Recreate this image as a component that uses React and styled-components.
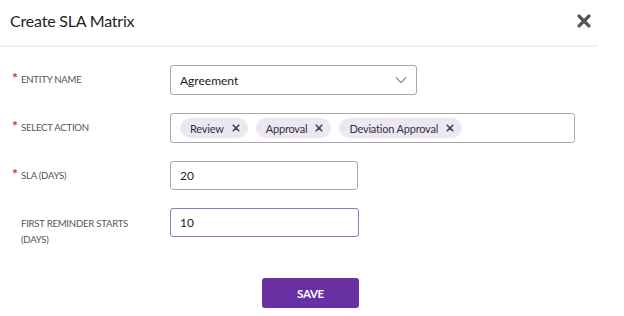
import React from "react";
import styled, { createGlobalStyle } from "styled-components";

const GlobalStyle = createGlobalStyle`
  html, body {
    margin: 0;
    padding: 0;
    background: #fff;
    font-family: "Lato", "Open Sans", sans-serif;
  }
  * { box-sizing: border-box; }
`;

const Modal = styled.div`
  width: 598px;
  height: 316px;
  background: #fff;
`;

const Header = styled.div`
  display: flex;
  align-items: center;
  justify-content: space-between;
  height: 47px;
  padding: 0 7px 4px 10px;
  border-bottom: 2px solid #f0f0f0;
`;

const Title = styled.h2`
  margin: 0;
  font-size: 16px;
  font-weight: 400;
  color: #222;
  letter-spacing: -0.2px;
`;

const CloseButton = styled.button`
  border: none;
  background: none;
  padding: 0;
  display: flex;
  cursor: pointer;
`;

const Form = styled.div`
  display: flex;
  flex-direction: column;
  gap: 18px;
  padding: 18px 0 0 12px;
`;

const Row = styled.div`
  display: grid;
  grid-template-columns: 158px auto;
  align-items: ${(p) => (p.$top ? "start" : "center")};
`;

const Label = styled.label`
  display: flex;
  gap: 3px;
  font-size: 9.6px;
  line-height: 16px;
  color: #555;
  letter-spacing: -0.25px;
  text-transform: uppercase;
  padding-top: ${(p) => (p.$top ? "8px" : "0")};
`;

const Star = styled.span`
  color: #e8261f;
  font-size: 14px;
  font-weight: 700;
  width: 6px;
  line-height: 12px;
`;

const Field = styled.div`
  display: flex;
  align-items: center;
  width: ${(p) => p.$w}px;
  height: ${(p) => p.$h || 30}px;
  padding: 0 9px;
  border: 1px solid ${(p) => (p.$focus ? "#9b72c9" : "#a9a9a9")};
  border-radius: 3px;
  font-size: 12px;
  color: #222;
  gap: 8px;
`;

const Value = styled.span`
  flex: 1;
`;

const Chip = styled.span`
  display: inline-flex;
  align-items: center;
  gap: 8px;
  height: 20px;
  padding: 0 8px 0 10px;
  border-radius: 10px;
  background: #ede7f4;
  font-size: 11px;
  letter-spacing: -0.2px;
  color: #333;
`;

const Footer = styled.div`
  display: flex;
  padding: 30px 0 0 262px;
`;

const SaveButton = styled.button`
  width: 97px;
  height: 30px;
  border: none;
  border-radius: 3px;
  background: #6930a3;
  color: #fff;
  font-family: inherit;
  font-size: 11.5px;
  font-weight: 700;
  letter-spacing: -0.3px;
`;

const Cross = ({ size = 8, color = "#444", stroke = 2 }) => (
  <svg width={size} height={size} viewBox="0 0 10 10">
    <path d="M1.5 1.5 L8.5 8.5 M8.5 1.5 L1.5 8.5" stroke={color} strokeWidth={stroke} strokeLinecap="round" />
  </svg>
);

const Chevron = () => (
  <svg width="12" height="8" viewBox="0 0 12 8">
    <path d="M1 1.5 L6 6.5 L11 1.5" fill="none" stroke="#999" strokeWidth="1.5" />
  </svg>
);

const actions = ["Review", "Approval", "Deviation Approval"];

export default function App() {
  return (
    <>
      <GlobalStyle />
      <Modal>
        <Header>
          <Title>Create SLA Matrix</Title>
          <CloseButton>
            <Cross size={14} color="#555" stroke={2.4} />
          </CloseButton>
        </Header>
        <Form>
          <Row>
            <Label><Star>*</Star>Entity Name</Label>
            <Field $w={247}>
              <Value>Agreement</Value>
              <Chevron />
            </Field>
          </Row>
          <Row>
            <Label><Star>*</Star>Select Action</Label>
            <Field $w={405}>
              {actions.map((a) => (
                <Chip key={a}>
                  {a}
                  <Cross />
                </Chip>
              ))}
            </Field>
          </Row>
          <Row>
            <Label><Star>*</Star>SLA (Days)</Label>
            <Field $w={188} $h={29}>20</Field>
          </Row>
          <Row $top>
            <Label $top><Star />First Reminder Starts<br />(Days)</Label>
            <Field $w={189} $h={29} $focus>10</Field>
          </Row>
        </Form>
        <Footer>
          <SaveButton>SAVE</SaveButton>
        </Footer>
      </Modal>
    </>
  );
}
